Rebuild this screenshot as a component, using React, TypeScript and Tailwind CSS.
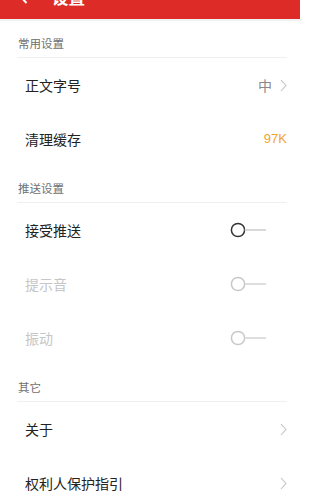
import React from "react";

const font = { fontFamily: '"Noto Sans CJK SC", "Noto Sans", sans-serif' };

function Chevron() {
  return (
    <svg width="7" height="13" viewBox="0 0 7 13" className="shrink-0">
      <path d="M1 1 L6 6.5 L1 12" fill="none" stroke="#c4c4c4" strokeWidth="1.1" />
    </svg>
  );
}

function Toggle({ disabled }: { disabled?: boolean }) {
  const c = disabled ? "#c8c8c8" : "#333333";
  return (
    <svg width="37" height="16" viewBox="0 0 37 16" className="mr-[20px] shrink-0">
      <circle cx="8" cy="8" r="6.6" fill="none" stroke={c} strokeWidth="1.5" />
      <line x1="14.6" y1="8" x2="36" y2="8" stroke={disabled ? "#d6d6d6" : "#cfcfcf"} strokeWidth="1.6" />
    </svg>
  );
}

function SectionHeader({ title }: { title: string }) {
  return (
    <div className="h-[37px] flex items-end pb-[6px] border-b border-[#efefef] pl-[1px]">
      <span className="text-[11.5px] leading-[16px] text-[#707070]">{title}</span>
    </div>
  );
}

function Row({ label, disabled, children }: { label: string; disabled?: boolean; children?: React.ReactNode }) {
  return (
    <div className="h-[54px] flex items-center justify-between pl-[8px]">
      <span className={`text-[14px] leading-[20px] ${disabled ? "text-[#c6c6c6]" : "text-[#222222]"}`}>{label}</span>
      <div className="flex items-center">{children}</div>
    </div>
  );
}

export default function App() {
  return (
    <div className="w-[302px] h-[491px] overflow-hidden bg-white" style={font}>
      <div className="h-[45px] mt-[-26px] bg-[#dd2b27] flex items-center pl-[19px] mr-[2px]">
        <svg width="9" height="15" viewBox="0 0 9 15">
          <path d="M7.5 1 L1.5 7.5 L7.5 14" fill="none" stroke="#ffffff" strokeWidth="2" />
        </svg>
        <span className="ml-[24px] text-[16.5px] font-bold text-white leading-[22px]">设置</span>
      </div>
      <div className="h-[2px] bg-[#f1f1f1]" />
      <div className="pl-[17px] pr-[15px]">
        <SectionHeader title="常用设置" />
        <Row label="正文字号">
          <span className="text-[14px] leading-[20px] text-[#8a8a8a] mr-[8px]">中</span>
          <Chevron />
        </Row>
        <Row label="清理缓存">
          <span className="text-[13px] leading-[20px] text-[#f2a531]" style={{ fontFamily: '"Liberation Sans", Arial, sans-serif' }}>97K</span>
        </Row>
        <SectionHeader title="推送设置" />
        <Row label="接受推送">
          <Toggle />
        </Row>
        <Row label="提示音" disabled>
          <Toggle disabled />
        </Row>
        <Row label="振动" disabled>
          <Toggle disabled />
        </Row>
        <SectionHeader title="其它" />
        <Row label="关于">
          <Chevron />
        </Row>
        <Row label="权利人保护指引">
          <Chevron />
        </Row>
      </div>
    </div>
  );
}
